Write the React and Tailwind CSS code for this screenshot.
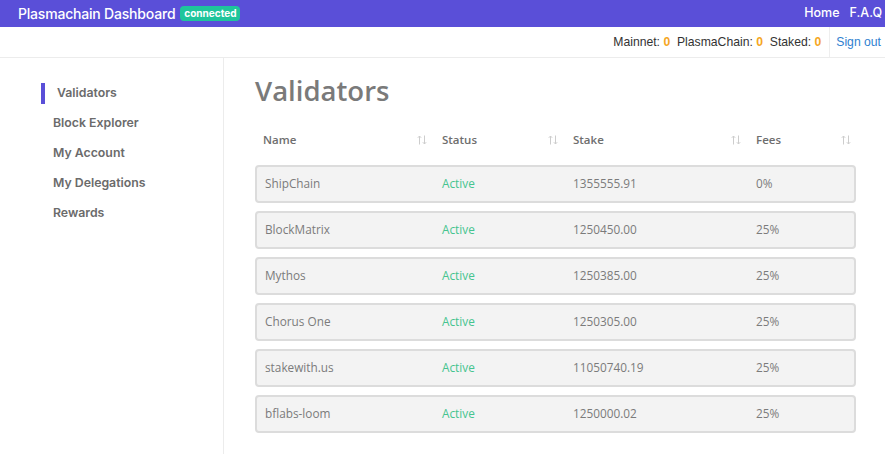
import React from "react";

const validators = [
  { name: "ShipChain", status: "Active", stake: "1355555.91", fees: "0%" },
  { name: "BlockMatrix", status: "Active", stake: "1250450.00", fees: "25%" },
  { name: "Mythos", status: "Active", stake: "1250385.00", fees: "25%" },
  { name: "Chorus One", status: "Active", stake: "1250305.00", fees: "25%" },
  { name: "stakewith.us", status: "Active", stake: "11050740.19", fees: "25%" },
  { name: "bflabs-loom", status: "Active", stake: "1250000.02", fees: "25%" },
];

const menu = ["Validators", "Block Explorer", "My Account", "My Delegations", "Rewards"];

// small up/down arrows next to column headers
const SortIcon = () => (
  <svg width="10" height="10" viewBox="0 0 10 10" fill="none" stroke="#cdcdcd" strokeWidth="1">
    <path d="M2.5 9.5V1M0.8 2.8L2.5 1L4.2 2.8" />
    <path d="M7.5 0.5V9M5.8 7.2L7.5 9L9.2 7.2" />
  </svg>
);

const HeadCell = ({ children }) => (
  <div className="flex items-center justify-between pl-[8px] pr-[5px]">
    <span>{children}</span>
    <SortIcon />
  </div>
);

export default function App() {
  return (
    <div className="w-[885px] h-[454px] bg-white overflow-hidden flex flex-col">
      {/* top bar */}
      <div className="h-[27px] bg-[#5a4fd8] flex items-center pl-[18px] pr-[3px] text-white font-['Inter',sans-serif]">
        <span className="text-[14px] font-medium tracking-[-0.2px]">Plasmachain Dashboard</span>
        <span className="ml-[5px] bg-[#1ec59b] text-white text-[10px] font-bold rounded-[4px] px-[4px] h-[15px] leading-[15px]">
          connected
        </span>
        <div className="ml-auto flex gap-[10px] text-[12.5px] font-medium">
          <span>Home</span>
          <span>F.A.Q</span>
        </div>
      </div>

      {/* account bar */}
      <div className="h-[31px] flex justify-end items-stretch border-b border-[#ececec] font-['Liberation_Sans',sans-serif] text-[12.2px] text-[#333]">
        <div className="flex items-center pr-[8px]">
          Mainnet:&nbsp;<b className="text-[#f5a623]">0</b>&nbsp;&nbsp;PlasmaChain:&nbsp;
          <b className="text-[#f5a623]">0</b>&nbsp;&nbsp;Staked:&nbsp;<b className="text-[#f5a623]">0</b>
        </div>
        <div className="flex items-center border-l border-[#eeeeee] pl-[6px] pr-[4px] text-[#2f7fd0]">
          Sign out
        </div>
      </div>

      <div className="flex flex-1">
        {/* sidebar */}
        <div className="w-[224px] border-r border-[#ececec] pt-[20px] font-['Inter',sans-serif]">
          {menu.map((item, i) => (
            <div key={item} className="h-[30px] flex items-center pl-[41px]">
              <div className={`w-[4px] h-[21px] mr-[8px] ${i === 0 ? "bg-[#5a4fd8]" : ""}`} />
              <span className={`text-[12.3px] font-semibold text-[#6b6b6b] ${i === 0 ? "ml-[4px]" : ""}`}>{item}</span>
            </div>
          ))}
        </div>

        {/* main */}
        <div className="flex-1 pl-[31px] font-['Open_Sans',sans-serif]">
          <h1 className="text-[27.5px] font-semibold text-[#7a7a7a] mt-[13px] leading-[40px]">
            Validators
          </h1>

          <div className="w-[601px] mt-[16px]">
            <div className="grid grid-cols-[177px_131px_183px_110px] h-[26px] items-center text-[11.5px] font-semibold text-[#6e6e6e]">
              <HeadCell>Name</HeadCell>
              <HeadCell>
                <span className="ml-[2px]">Status</span>
              </HeadCell>
              <HeadCell>
                <span className="ml-[2px]">Stake</span>
              </HeadCell>
              <HeadCell>
                <span className="ml-[2px]">Fees</span>
              </HeadCell>
            </div>

            <div className="mt-[12px] flex flex-col gap-[8px]">
              {validators.map((v) => (
                <div
                  key={v.name}
                  className="grid grid-cols-[175px_131px_183px_108px] h-[38px] items-center bg-[#f3f3f3] border-2 border-[#dcdcdc] rounded-[4px] text-[11.8px] text-[#7b7b7b]"
                >
                  <span className="pl-[8px]">{v.name}</span>
                  <span className="pl-[10px] text-[#45c48f]">{v.status}</span>
                  <span className="pl-[10px]">{v.stake}</span>
                  <span className="pl-[10px]">{v.fees}</span>
                </div>
              ))}
            </div>
          </div>
        </div>
      </div>
    </div>
  );
}
